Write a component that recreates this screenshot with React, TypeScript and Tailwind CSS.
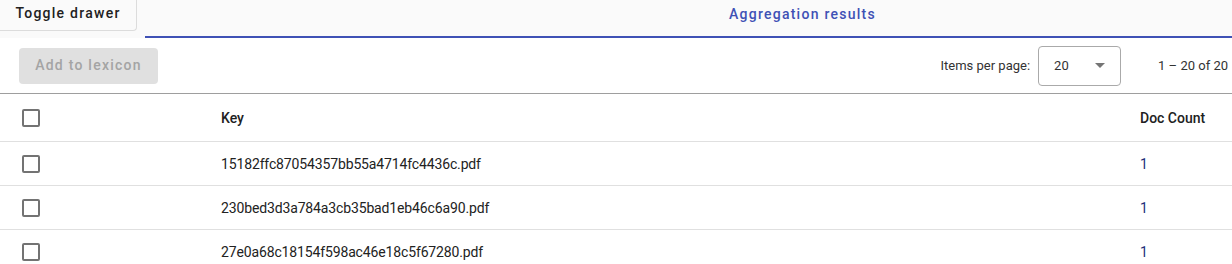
import { useState } from 'react';

const ROWS = [
  { key: '15182ffc87054357bb55a4714fc4436c.pdf', count: 1 },
  { key: '230bed3d3a784a3cb35bad1eb46c6a90.pdf', count: 1 },
  { key: '27e0a68c18154f598ac46e18c5f67280.pdf', count: 1 },
];

function Box({ checked, onClick }: { checked: boolean; onClick: () => void }) {
  return (
    <button
      type="button"
      onClick={onClick}
      className={`block h-[18px] w-[18px] rounded-[2px] border-2 ${checked ? 'border-[#3f51b5] bg-[#3f51b5]' : 'border-[#737373] bg-white'}`}
      aria-label="select"
    />
  );
}

export default function App() {
  const [sel, setSel] = useState<Record<string, boolean>>({});
  const all = ROWS.every((r) => sel[r.key]);

  return (
    <div className="h-[264px] w-[1232px] overflow-hidden bg-white font-['Roboto',sans-serif] text-[#212121]">
      {/* top strip: drawer toggle + tab header */}
      <div className="flex h-[38px] bg-[#fafafa]">
        <button
          type="button"
          className="h-[31px] w-[137px] shrink-0 rounded-br-[4px] border-r border-b border-[#dcdcdc] bg-[#fafafa] pb-[4px] text-[14px] font-medium tracking-[1.25px] text-[#212121]"
        >
          Toggle drawer
        </button>
        <div className="ml-[8px] flex flex-1 items-start border-b-2 border-[#3f51b5]">
          <span className="ml-[584px] mt-[4px] text-[14px] font-medium tracking-[1.25px] text-[#3f51b5]">
            Aggregation results
          </span>
        </div>
      </div>

      {/* toolbar */}
      <div className="flex h-[56px] items-center border-b border-[#9e9e9e] pl-[19px] pr-[4px]">
        <button
          type="button"
          disabled
          className="h-[36px] w-[139px] rounded-[4px] bg-[#e0e0e0] text-[14px] font-medium tracking-[1.25px] text-[#a4a4a4]"
        >
          Add to lexicon
        </button>
        <div className="ml-auto flex items-center text-[13px] text-[#333]">
          <span className="mr-[8px]">Items per page:</span>
          <div className="flex h-[40px] w-[83px] items-center justify-between rounded-[4px] border border-[#aaaaaa] pl-[15px] pr-[15px]">
            <span>20</span>
            <svg width="10" height="5" viewBox="0 0 10 5">
              <path d="M0 0 L10 0 L5 5 Z" fill="#757575" />
            </svg>
          </div>
          <span className="ml-[37px]">1 – 20 of 20</span>
        </div>
      </div>

      {/* table */}
      <div className="text-[14px]">
        <div className="flex h-[48px] items-center border-b border-[#e0e0e0] font-medium text-[#212121]">
          <div className="w-[221px] pl-[22px]">
            <Box
              checked={all}
              onClick={() => setSel(all ? {} : Object.fromEntries(ROWS.map((r) => [r.key, true])))}
            />
          </div>
          <div className="flex-1 pt-[2px]">Key</div>
          <div className="w-[92px] pt-[2px]">Doc Count</div>
        </div>
        {ROWS.map((r) => (
          <div key={r.key} className="flex h-[44px] items-center border-b border-[#e0e0e0]">
            <div className="w-[221px] pl-[22px]">
              <Box checked={!!sel[r.key]} onClick={() => setSel({ ...sel, [r.key]: !sel[r.key] })} />
            </div>
            <div className="flex-1 pt-[2px] tracking-[-0.14px] text-[#222]">{r.key}</div>
            <div className="w-[92px] pt-[2px] text-[#24307a]">{r.count}</div>
          </div>
        ))}
      </div>
    </div>
  );
}
